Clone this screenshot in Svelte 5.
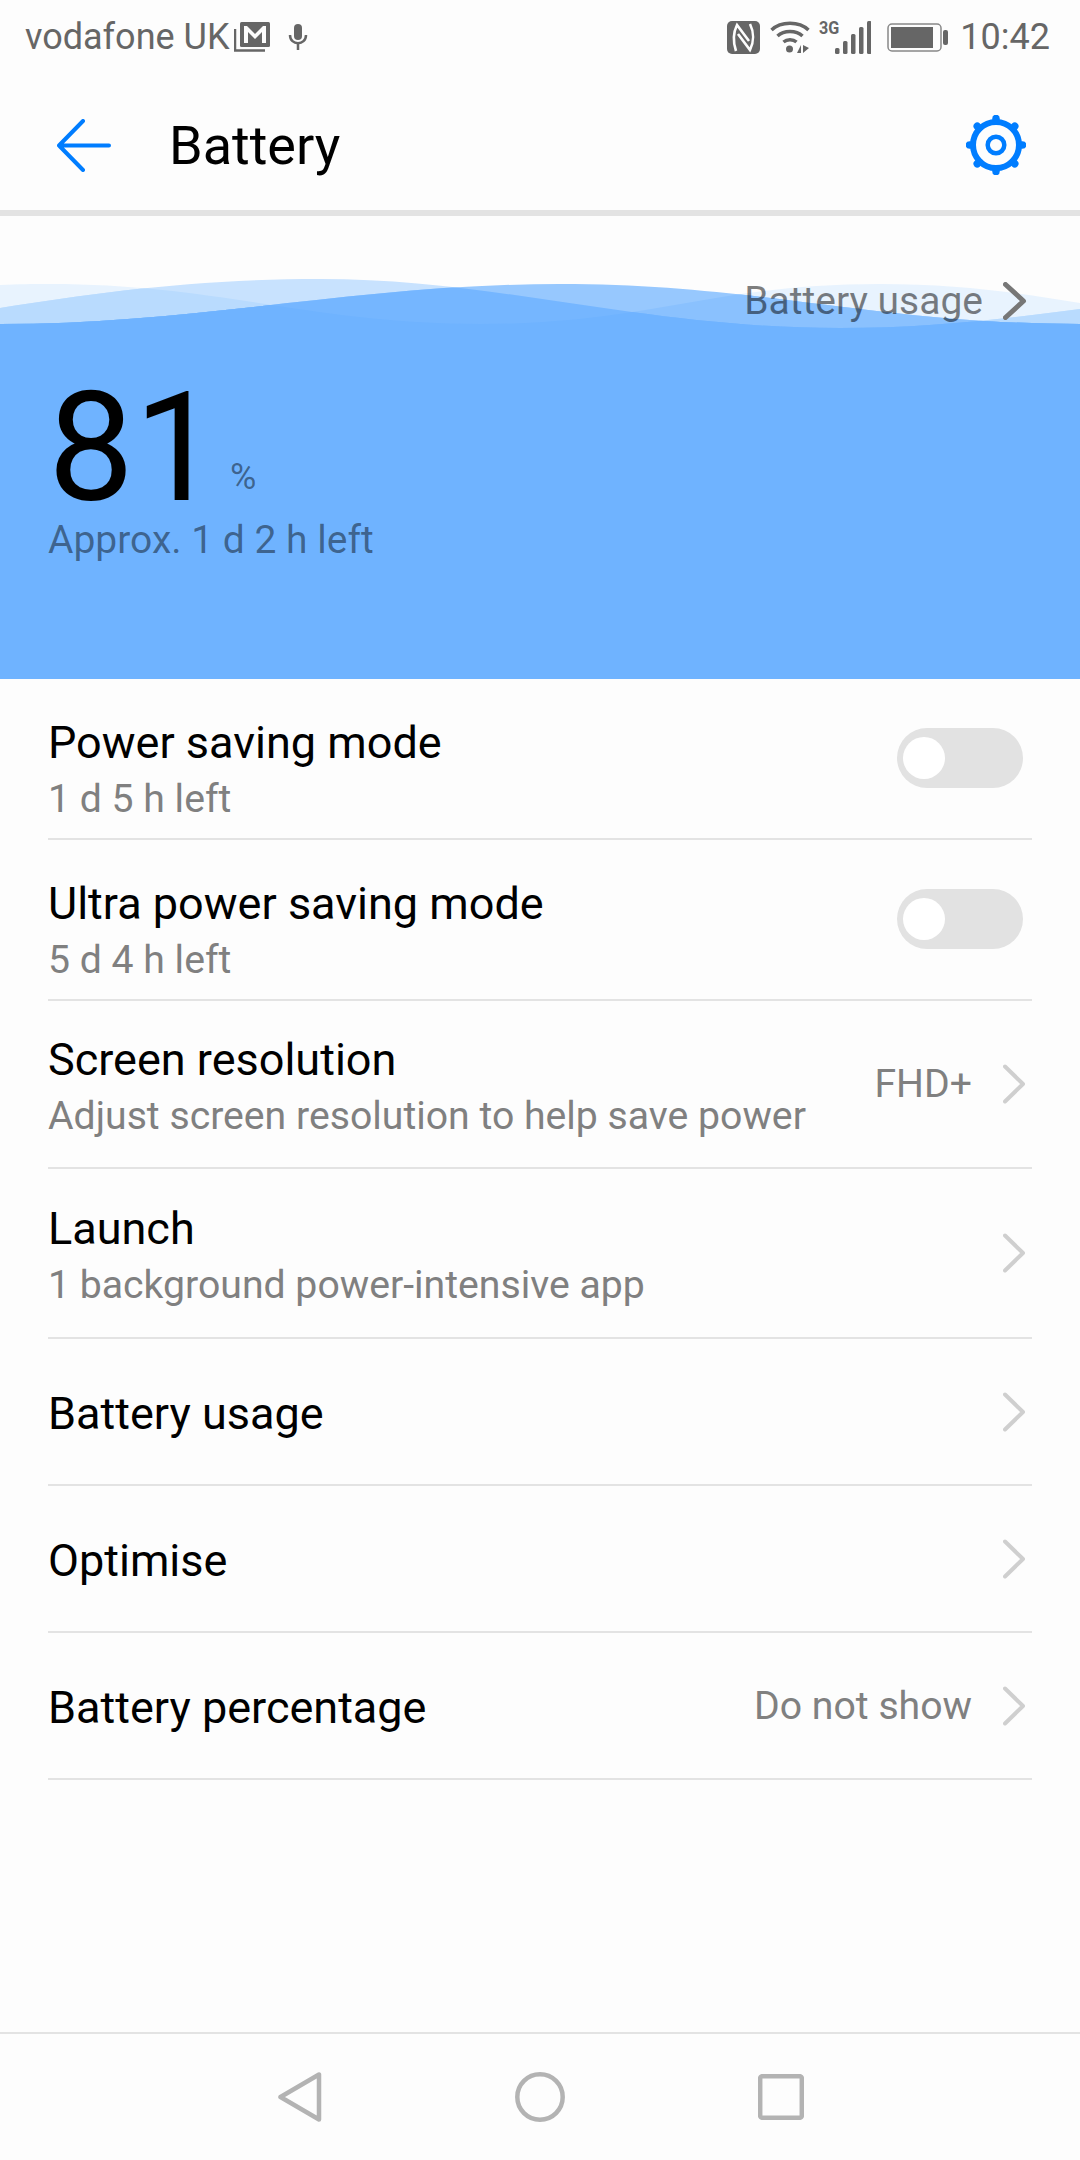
<script lang="ts">
  const bottom = ' L1080 336 L0 336 Z';
  const waveB = 'M0 308 C100 292 200 279 320 279 C500 279 640 328 840 328 C930 328 1010 318 1080 309' + bottom;
  const waveC = 'M0 285 C20 284 30 284 50 284 C220 284 310 324 480 324 C650 324 710 284 880 284 C960 284 1020 293 1080 303' + bottom;
  const waveD = 'M0 324 C200 324 360 284 560 284 C760 284 880 324 1080 324' + bottom;

  const teeth = [0, 45, 90, 135, 180, 225, 270, 315];
  const bars = [
    { x: 1, h: 6 },
    { x: 9, h: 13 },
    { x: 17, h: 20 },
    { x: 25, h: 27 },
    { x: 33, h: 33 }
  ];

  const rows = [
    { title: 'Power saving mode', sub: '1 d 5 h left', kind: 'switch' },
    { title: 'Ultra power saving mode', sub: '5 d 4 h left', kind: 'switch' },
    { title: 'Screen resolution', sub: 'Adjust screen resolution to help save power', value: 'FHD+', kind: 'two' },
    { title: 'Launch', sub: '1 background power-intensive app', kind: 'two tall' },
    { title: 'Battery usage', kind: 'plain' },
    { title: 'Optimise', kind: 'plain' },
    { title: 'Battery percentage', value: 'Do not show', kind: 'plain' }
  ];
</script>

<div class="screen">
  <div class="status">
    <div class="status-left">
      <span>vodafone UK</span>
      <svg class="mail" width="36" height="30" viewBox="0 0 36 30">
        <path d="M1 7 V28.500 H31" fill="none" stroke="#666" stroke-width="2.500" />
        <rect x="6" y="0" width="30" height="25" rx="1.500" fill="#666" />
        <path d="M10 4 H13 L21 12 L29 4 H32 V21 H28 V10 L21 17 L14 10 V21 H10 Z" fill="#fdfdfd" />
      </svg>
      <svg class="mic" width="20" height="26" viewBox="0 0 20 26">
        <rect x="6" y="0" width="8" height="16" rx="4" fill="#666" />
        <path d="M2 11 C2 22 18 22 18 11 M10 19 V26" fill="none" stroke="#666" stroke-width="2.500" />
      </svg>
    </div>
    <div class="status-right">
      <svg class="nfc" width="33" height="33" viewBox="0 0 33 33">
        <rect width="33" height="33" rx="5" fill="#666" />
        <path d="M9 30 C6 21 6 12 10 4 L22 20 M11 13 L23 29 C27 21 27 11 23 3" fill="none" stroke="#fdfdfd" stroke-width="2.600" />
      </svg>
      <svg class="wifi" width="40" height="33" viewBox="0 0 40 33">
        <g fill="none" stroke="#666" stroke-width="3.500">
          <path d="M1.500 9 C11 0 29 0 38.500 9" />
          <path d="M7.500 15 C14 9 26 9 32.500 15" />
          <path d="M13.500 21 C17 18 23 18 26.500 21" />
        </g>
        <circle cx="19.500" cy="28" r="3.500" fill="#666" />
        <path d="M27 32 L31 24 V32 Z M33 24 V32 L39 27 Z" fill="#666" />
      </svg>
      <div class="signal">
        <span class="net">3G</span>
        <svg width="36" height="34" viewBox="0 0 36 34">
          {#each bars as bar}
            <rect x={bar.x - 1} y={34 - bar.h} width="4.500" height={bar.h} rx="1.500" fill="#666" />
          {/each}
        </svg>
      </div>
      <svg class="batt" width="61" height="29" viewBox="0 0 61 29">
        <rect x="1" y="1" width="53" height="27" rx="4" fill="none" stroke="#888" stroke-width="1.500" />
        <rect x="4" y="4" width="42" height="21" fill="#666" />
        <rect x="56" y="7" width="5" height="15" rx="2" fill="#666" />
      </svg>
      <span class="time">10:42</span>
    </div>
  </div>

  <header class="topbar">
    <svg class="back" width="54" height="53" viewBox="0 0 54 53">
      <path d="M26 2 L2 26.500 L26 51 M2 26.500 H52" fill="none" stroke="#007dff" stroke-width="4" stroke-linecap="round" stroke-linejoin="round" />
    </svg>
    <h1>Battery</h1>
    <svg class="gear" width="60" height="60" viewBox="0 0 60 60">
      <g fill="none" stroke="#007dff">
        <circle cx="30" cy="30" r="23" stroke-width="6" />
        <circle cx="30" cy="30" r="8.300" stroke-width="4.500" />
        {#each teeth as angle}
          <path d="M30 3.500 V6" stroke-width="7.500" stroke-linecap="round" transform="rotate({angle} 30 30)" />
        {/each}
      </g>
    </svg>
  </header>

  <section class="hero">
    <svg class="waves" width="1080" height="120" viewBox="0 216 1080 120">
      <defs>
        <clipPath id="clip-b"><path d={waveB} /></clipPath>
        <clipPath id="clip-d"><path d={waveD} /></clipPath>
      </defs>
      <path d={waveC} fill="#e8f3fe" />
      <path d={waveB} fill="#c8e2fe" />
      <g clip-path="url(#clip-b)"><path d={waveC} fill="#b9dbfe" /></g>
      <g clip-path="url(#clip-d)">
        <rect x="0" y="216" width="1080" height="120" fill="#97c8fe" />
        <path d={waveC} fill="#8ac1fe" />
        <path d={waveB} fill="#75b6ff" />
        <g clip-path="url(#clip-b)"><path d={waveC} fill="#6fb3ff" /></g>
      </g>
    </svg>
    <div class="usage-link">
      <span>Battery usage</span>
      <svg width="24" height="38" viewBox="0 0 24 38">
        <path d="M2.500 2.500 L20.500 19 L2.500 35.500" fill="none" stroke="#777" stroke-width="5" stroke-linecap="round" stroke-linejoin="round" />
      </svg>
    </div>
    <div class="level">
      <span class="num">81</span>
      <span class="pct">%</span>
    </div>
    <div class="left">Approx. 1 d 2 h left</div>
  </section>

  <ul class="list">
    {#each rows as row}
      <li class="row {row.kind}">
        <div class="text">
          <div class="title">{row.title}</div>
          {#if row.sub}
            <div class="sub">{row.sub}</div>
          {/if}
        </div>
        {#if row.kind === 'switch'}
          <div class="toggle"><div class="knob"></div></div>
        {:else}
          {#if row.value}
            <span class="value">{row.value}</span>
          {/if}
          <svg class="chev" width="22" height="40" viewBox="0 0 22 40">
            <path d="M2 2.500 L20 20 L2 37.500" fill="none" stroke="#cfcfcf" stroke-width="4" stroke-linecap="round" stroke-linejoin="round" />
          </svg>
        {/if}
      </li>
    {/each}
  </ul>

  <nav class="navbar">
    <svg width="44" height="50" viewBox="0 0 44 50">
      <path d="M41 2.500 V47.500 L2.500 25 Z" fill="none" stroke="#b3b3b3" stroke-width="4.500" stroke-linejoin="round" />
    </svg>
    <svg width="50" height="50" viewBox="0 0 50 50">
      <circle cx="25" cy="25" r="22.700" fill="none" stroke="#b3b3b3" stroke-width="4.500" />
    </svg>
    <svg width="46" height="46" viewBox="0 0 46 46">
      <rect x="2.200" y="2.200" width="41.600" height="41.600" rx="2" fill="none" stroke="#b3b3b3" stroke-width="4.500" />
    </svg>
  </nav>
</div>

<style>
  :global(body) {
    background: #fdfdfd;
  }

  .screen {
    width: 1080px;
    height: 2160px;
    display: flex;
    flex-direction: column;
    background: #fdfdfd;
    font-family: Roboto, "Liberation Sans", sans-serif;
    overflow: hidden;
  }

  .status {
    height: 74px;
    padding: 0 30px 0 25px;
    display: flex;
    justify-content: space-between;
    align-items: center;
    color: #666;
    font-size: 36px;
  }

  .status-left,
  .status-right {
    display: flex;
    align-items: center;
  }

  .mail {
    margin-left: 5px;
  }

  .mic {
    margin-left: 18px;
  }

  .wifi {
    margin-left: 10px;
  }

  .signal {
    margin-left: 9px;
    position: relative;
    width: 52px;
    height: 34px;
  }

  .signal svg {
    position: absolute;
    right: 0;
    top: 0;
  }

  .net {
    position: absolute;
    left: 0;
    top: -1px;
    font-size: 19px;
    line-height: 18px;
    font-weight: 700;
    transform: scaleX(0.85);
    transform-origin: left;
  }

  .batt {
    margin-left: 16px;
  }

  .time {
    margin-left: 12px;
  }

  .topbar {
    height: 130px;
    padding: 6px 54px 0 57px;
    display: flex;
    align-items: center;
    border-bottom: 6px solid #e3e3e3;
  }

  .topbar h1 {
    margin: 0 0 0 58px;
    flex: 1;
    font-size: 54px;
    font-weight: 400;
    color: #000;
  }

  .hero {
    position: relative;
    height: 463px;
    padding: 0 48px;
    box-sizing: border-box;
    background: linear-gradient(transparent 120px, #6fb3ff 120px);
  }

  .waves {
    position: absolute;
    left: 0;
    top: 0;
  }

  .usage-link {
    position: relative;
    height: 170px;
    margin-right: 5px;
    display: flex;
    justify-content: flex-end;
    align-items: center;
    gap: 20px;
    font-size: 39px;
    color: rgba(0, 0, 0, 0.5);
  }

  .level {
    position: relative;
    display: flex;
    align-items: baseline;
    margin-top: -14px;
    height: 144px;
  }

  .num {
    font-size: 153px;
    line-height: 152px;
    font-weight: 400;
    color: #000;
  }

  .pct {
    margin-left: 10px;
    font-size: 36px;
    color: rgba(0, 0, 0, 0.45);
    transform: translateY(-11px);
  }

  .left {
    position: relative;
    font-size: 39px;
    line-height: 48px;
    color: rgba(0, 0, 0, 0.45);
  }

  .list {
    list-style: none;
    margin: 0;
    padding: 0 48px;
  }

  .row {
    box-sizing: border-box;
    height: 147px;
    display: flex;
    align-items: center;
    border-bottom: 2px solid #e3e3e3;
  }

  .row.switch {
    height: 161px;
  }

  .row.two {
    height: 168px;
  }

  .row.tall {
    height: 170px;
  }

  .text {
    flex: 1;
    min-width: 0;
    padding-top: 3px;
  }

  .row.switch .text {
    padding-top: 24px;
  }

  .row.two .text {
    padding-top: 7px;
  }

  .title {
    font-size: 45px;
    line-height: 57px;
    color: #000;
  }

  .sub {
    font-size: 39.200px;
    line-height: 57px;
    color: #808080;
  }

  .value {
    margin-right: 31px;
    font-size: 39.200px;
    color: #808080;
  }

  .chev {
    margin-right: 7px;
  }

  .toggle {
    width: 126px;
    height: 60px;
    margin: 0 9px 1px 0;
    border-radius: 30px;
    background: #e2e2e2;
    display: flex;
    align-items: center;
    padding-left: 6px;
    box-sizing: border-box;
  }

  .knob {
    width: 42px;
    height: 42px;
    border-radius: 50%;
    background: #fff;
  }

  .navbar {
    margin-top: auto;
    height: 126px;
    padding-left: 2px;
    border-top: 2px solid #e3e3e3;
    display: flex;
    align-items: center;
    justify-content: center;
    gap: 193px;
  }
</style>
